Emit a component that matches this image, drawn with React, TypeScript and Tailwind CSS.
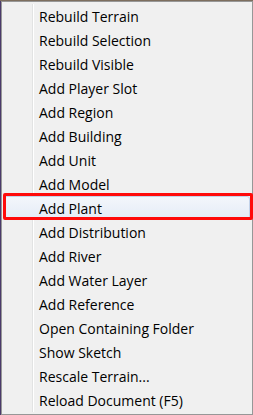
const items = [
  "Rebuild Terrain",
  "Rebuild Selection",
  "Rebuild Visible",
  "Add Player Slot",
  "Add Region",
  "Add Building",
  "Add Unit",
  "Add Model",
  "Add Plant",
  "Add Distribution",
  "Add River",
  "Add Water Layer",
  "Add Reference",
  "Open Containing Folder",
  "Show Sketch",
  "Rescale Terrain...",
  "Reload Document (F5)",
];

const App = () => {
  return (
    <div className="w-[253px] h-[415px] bg-[#7d6e5e] flex flex-col overflow-hidden">
      <div className="h-px shrink-0" />
      <div className="flex flex-1">
        <div className="w-px shrink-0 bg-[#4b3a6b]" />
        <div
          className="relative flex-1 border border-[#979797] bg-[#f0f0f0] pt-[2px] px-[2px]"
          style={{ fontFamily: '"Open Sans", "Noto Sans", sans-serif' }}
        >
          {/* gutter line */}
          <div className="absolute top-[2px] bottom-[2px] left-[30px] w-[2px] flex">
            <div className="w-px bg-[#e2e3e3]" />
            <div className="w-px bg-white" />
          </div>

          <div className="flex flex-col">
            {items.map((label) => {
              const active = label === "Add Plant";
              return (
                <div
                  key={label}
                  className={
                    active
                      ? "relative h-[24px] flex items-center pl-[34px] text-[14px] text-black rounded-[3px] border border-[#c3d3ea] bg-gradient-to-b from-[#f3f6fb] to-[#e4ecf7]"
                      : "relative h-[24px] flex items-center pl-[35px] text-[14px] text-black"
                  }
                >
                  {label}
                </div>
              );
            })}
          </div>

          {/* red annotation box */}
          <div className="absolute left-[1px] right-[-1px] top-[191px] h-[27px] border-[3px] border-[#ff0a0a] rounded-[2px]" />
        </div>
      </div>
    </div>
  );
};

export default App;
